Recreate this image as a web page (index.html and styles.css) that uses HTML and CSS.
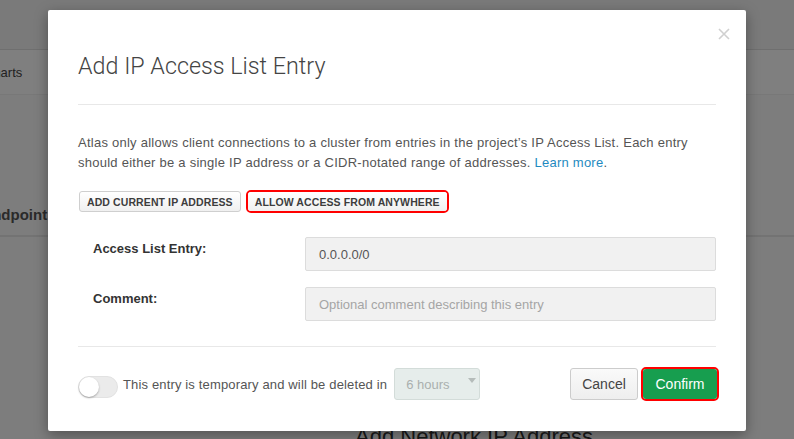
FILE: index.html
```html
<!DOCTYPE html>
<html>
<head>
<meta charset="utf-8">
<link rel="stylesheet" href="styles.css">
</head>
<body>
<div class="page">
  <div class="topbar"></div>
  <div class="tabs"><span class="tab">Charts</span></div>
  <div class="content">
    <div class="section-title">Private Endpoint</div>
    <div class="bottom-title">Add Network IP Address</div>
  </div>
</div>
<div class="overlay"></div>
<div class="modal">
  <button class="close" aria-label="Close">
    <svg width="12" height="12" viewBox="0 0 12 12"><path d="M1 1L11 11M11 1L1 11" stroke="#d0d0d0" stroke-width="1.6" fill="none"/></svg>
  </button>
  <div class="modal-header">
    <h2 class="modal-title">Add IP Access List Entry</h2>
  </div>
  <div class="modal-body">
    <p class="intro">Atlas only allows client connections to a cluster from entries in the project’s IP Access List. Each entry should either be a single IP address or a CIDR-notated range of addresses. <a class="link" href="#">Learn more</a>.</p>
    <div class="actions">
      <button class="btn-small">ADD CURRENT IP ADDRESS</button>
      <span class="highlight highlight-small"><button class="btn-small btn-flat">ALLOW ACCESS FROM ANYWHERE</button></span>
    </div>
    <div class="form">
      <label class="label">Access List Entry:</label>
      <div class="input">0.0.0.0/0</div>
      <label class="label">Comment:</label>
      <div class="input placeholder">Optional comment describing this entry</div>
    </div>
  </div>
  <div class="modal-footer">
    <div class="temp">
      <span class="toggle"><span class="knob"></span></span>
      <span class="temp-text">This entry is temporary and will be deleted in</span>
      <span class="select">6 hours<svg class="caret" width="8" height="5" viewBox="0 0 8 5"><path d="M0 0H8L4 5Z" fill="#b5bcba"/></svg></span>
    </div>
    <div class="footer-buttons">
      <button class="btn-cancel">Cancel</button>
      <span class="highlight highlight-confirm"><button class="btn-confirm">Confirm</button></span>
    </div>
  </div>
</div>
</body>
</html>
```

FILE: styles.css
```css
* { box-sizing: border-box; }
html, body { margin: 0; padding: 0; }
body {
  width: 794px;
  height: 439px;
  overflow: hidden;
  font-family: "Liberation Sans", Arial, sans-serif;
  background: #fafafa;
  position: relative;
}
.page { display: flex; flex-direction: column; }
.topbar { height: 50px; background: #f4f4f4; border-bottom: 1px solid #dedede; }
.tabs {
  height: 45px;
  background: #ffffff;
  display: flex;
  align-items: center;
  margin-left: -16px;
  border-bottom: 1px solid #f0f0f0;
}
.tab { font-size: 13px; color: #444; }
.content { display: flex; flex-direction: column; background: #fafafa; }
.section-title {
  margin-top: 106px;
  margin-left: -72px;
  font-size: 15px;
  font-weight: bold;
  color: #555;
  height: 36px;
  line-height: 28px;
  border-bottom: 2px solid #e6e6e6;
}
.bottom-title {
  margin-top: 187px;
  margin-left: 355px;
  font-size: 22px;
  color: #333;
}
.overlay {
  position: absolute;
  inset: 0;
  background: rgba(0, 0, 0, 0.5);
}
.modal {
  position: absolute;
  left: 48px;
  top: 10px;
  width: 698px;
  height: 421px;
  background: #fff;
  border-radius: 2px;
  box-shadow: 0 4px 14px rgba(0, 0, 0, 0.35);
  display: flex;
  flex-direction: column;
}
.close {
  position: absolute;
  right: 16px;
  top: 18px;
  border: 0;
  background: none;
  padding: 0;
  width: 12px;
  height: 12px;
  line-height: 0;
}
.modal-header {
  margin: 0 30px;
  padding-top: 41px;
  height: 95px;
  border-bottom: 1px solid #e8e8e8;
}
.modal-title {
  margin: 0;
  font-family: Roboto, "Liberation Sans", sans-serif;
  font-weight: 300;
  font-size: 23.3px;
  line-height: 30px;
  color: #444;
}
.modal-body { padding: 0 30px; }
.intro {
  margin: 28px 0 0;
  font-size: 13px;
  letter-spacing: 0.25px;
  line-height: 20px;
  color: #555;
}
.link { color: #1f8ac0; text-decoration: none; }
.actions {
  display: flex;
  align-items: center;
  gap: 5px;
  margin-top: 17px;
  padding-left: 1px;
}
.btn-small {
  height: 21px;
  padding: 0 7px;
  font-family: "Liberation Sans", Arial, sans-serif;
  font-size: 10.5px;
  font-weight: bold;
  color: #3d3d3d;
  letter-spacing: 0.1px;
  background: linear-gradient(#ffffff, #f0f0f0);
  border: 1px solid #cfcfcf;
  border-radius: 3px;
}
.highlight {
  display: inline-flex;
  border: 2px solid #f00;
  border-radius: 5px;
}
.btn-flat { border: 0; height: 19px; }
.form {
  display: grid;
  grid-template-columns: 212px 411px;
  row-gap: 16px;
  align-items: start;
  margin-top: 24px;
  padding-left: 15px;
}
.label { font-size: 13px; font-weight: bold; color: #333; margin-top: 4px; }
.input {
  height: 34px;
  display: flex;
  align-items: center;
  padding-left: 13px;
  background: #f1f1f1;
  border: 1px solid #dcdcdc;
  border-radius: 2px;
  font-size: 13px;
  color: #555;
}
.input.placeholder { color: #a5a5a5; }
.modal-footer {
  margin: 25px 30px 0;
  border-top: 1px solid #e8e8e8;
  padding-top: 20px;
  display: flex;
  justify-content: space-between;
  align-items: center;
}
.temp { display: flex; align-items: center; }
.toggle {
  width: 40px;
  height: 22px;
  border-radius: 11px;
  background: #ebebeb;
  border: 1px solid #e2e2e2;
  position: relative;
  margin-right: 5px;
  margin-top: 6px;
}
.knob {
  position: absolute;
  left: 0;
  top: 0;
  width: 20px;
  height: 20px;
  border-radius: 50%;
  background: #fff;
  box-shadow: 0 1px 2px rgba(0,0,0,0.3);
}
.temp-text { font-size: 13px; color: #555; letter-spacing: 0.15px; }
.select {
  margin-left: 7px;
  width: 86px;
  height: 32px;
  display: flex;
  align-items: center;
  padding-left: 11px;
  gap: 18px;
  background: #e6edeb;
  border: 1px solid #d3dcd9;
  border-radius: 3px;
  font-size: 13px;
  color: #aab0ae;
}
.caret { margin-top: -8px; }
.footer-buttons { display: flex; align-items: center; gap: 1px; }
.btn-cancel {
  width: 68px;
  height: 32px;
  font-family: "Liberation Sans", Arial, sans-serif;
  font-size: 14px;
  color: #444;
  background: linear-gradient(#fafafa, #eeeeee);
  border: 1px solid #cccccc;
  border-radius: 3px;
  margin-right: 2px;
}
.highlight-confirm { border-radius: 5px; margin-right: -3px; }
.btn-confirm {
  width: 74px;
  height: 30px;
  font-family: "Liberation Sans", Arial, sans-serif;
  font-size: 14px;
  color: #fff;
  background: #179e4f;
  border: 0;
  border-radius: 3px;
}
```
